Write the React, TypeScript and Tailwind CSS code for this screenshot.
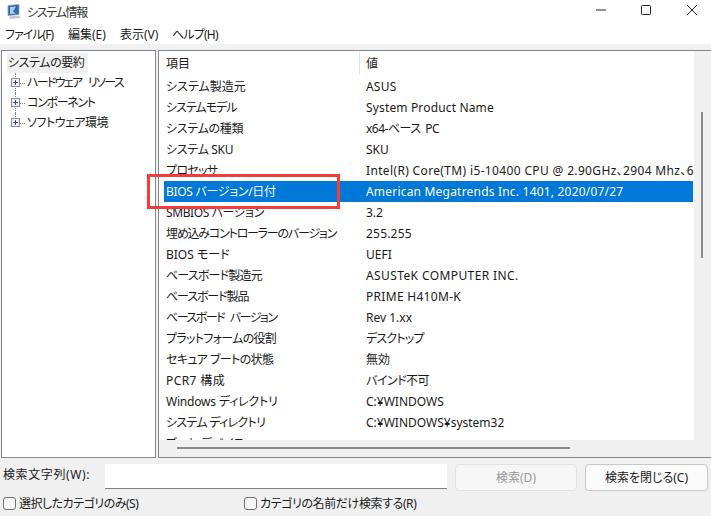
import React from "react";

// name, value, tracking of name, tracking of value
const rows = [
  ["システム製造元", "ASUS", "", "tracking-[0.2px]"],
  ["システムモデル", "System Product Name", "tracking-[-1px]", "tracking-[0.15px]"],
  ["システムの種類", "x64-ベース PC", "tracking-[-0.3px]", "tracking-[-0.5px] [word-spacing:2px]"],
  ["システム SKU", "SKU", "tracking-[-0.3px]", ""],
  ["プロセッサ", "Intel(R) Core(TM) i5-10400 CPU @ 2.90GHz、2904 Mhz、6", "tracking-[-0.7px]", "tracking-[0.35px]"],
  ["BIOS バージョン/日付", "American Megatrends Inc. 1401, 2020/07/27", "tracking-[-0.3px]", "tracking-[0.2px]"],
  ["SMBIOS バージョン", "3.2", "tracking-[-0.4px]", ""],
  ["埋め込みコントローラーのバージョン", "255.255", "tracking-[-1.2px]", "tracking-[0.2px]"],
  ["BIOS モード", "UEFI", "", ""],
  ["ベースボード製造元", "ASUSTeK COMPUTER INC.", "tracking-[-0.8px]", "tracking-[0.4px]"],
  ["ベースボード製品", "PRIME H410M-K", "tracking-[-1.1px]", "tracking-[0.3px]"],
  ["ベースボード バージョン", "Rev 1.xx", "tracking-[-1.5px] [word-spacing:4px]", ""],
  ["プラットフォームの役割", "デスクトップ", "tracking-[-0.7px]", "tracking-[-0.8px]"],
  ["セキュア ブートの状態", "無効", "tracking-[-0.6px]", ""],
  ["PCR7 構成", "バインド不可", "tracking-[0.4px]", "tracking-[-0.5px]"],
  ["Windows ディレクトリ", "C:¥WINDOWS", "tracking-[-0.2px]", ""],
  ["システム ディレクトリ", "C:¥WINDOWS¥system32", "tracking-[-0.7px]", ""],
  ["ブート デバイス", "", "", ""],
];

const TreeItem = ({ label, last, className }: { label: string; last?: boolean; className: string }) => (
  <div className="flex h-5 items-center">
    <div className="relative ml-[9px] h-full w-[9px] shrink-0">
      <div className={`absolute left-[4px] top-0 border-l border-dotted border-[#808080] ${last ? "h-[10px]" : "h-full"}`} />
      <div className="absolute left-0 top-[5px] flex h-[9px] w-[9px] items-center justify-center border border-[#8a8a9a] bg-[#eef0f4]">
        <svg width="7" height="7" viewBox="0 0 7 7">
          <path d="M1 3.5h5M3.5 1v5" stroke="#3a4a6a" strokeWidth="1" />
        </svg>
      </div>
    </div>
    <div className="w-[5px] border-t border-dotted border-[#808080]" />
    <span className={`ml-[2px] whitespace-nowrap ${className}`}>{label}</span>
  </div>
);

const Row = ({ row, selected }: { row: string[]; selected: boolean }) => (
  <div className={`flex h-[21px] shrink-0 items-center whitespace-nowrap pt-[1px] ${selected ? "bg-[#0078d7] text-white" : ""}`}>
    <div className={`w-[202px] shrink-0 pl-[2px] ${row[2]}`}>{row[0]}</div>
    <div className={row[3]}>{row[1]}</div>
  </div>
);

export default function App() {
  return (
    <div
      className="relative flex h-[516px] w-[711px] flex-col overflow-hidden bg-[#f0f0f0] text-[12px] text-[#1a1a1a] [font-feature-settings:'palt']"
      style={{ fontFamily: '"Noto Sans", "Noto Sans CJK JP", sans-serif' }}
    >
      <div className="h-[44px] shrink-0 bg-white">
        <div className="flex h-[25px] items-center">
          <svg className="mb-[2px] ml-[6px]" width="16" height="16" viewBox="0 0 16 16">
            <path d="M2 1.5l11-1v10l-11 1z" fill="#2f66ad" stroke="#8fa3bd" strokeWidth="0.8" />
            <path d="M4 3l6-.5-3 5 3 2-6 .5z" fill="#a9cdf2" />
            <path d="M3 12.5l10-1 2 2.5-11 1z" fill="#c4c9d0" />
          </svg>
          <span className="ml-[5px] tracking-[-1.3px] text-[#333]">システム情報</span>
          <div className="mb-[5px] ml-auto flex items-center">
            <svg width="12" height="12" viewBox="0 0 12 12" className="mr-[33px]">
              <path d="M1 6h10" stroke="#222" strokeWidth="1" />
            </svg>
            <svg width="12" height="12" viewBox="0 0 12 12" className="mr-[34px]">
              <rect x="1.5" y="1.5" width="9" height="9" rx="1" fill="none" stroke="#222" />
            </svg>
            <svg width="12" height="12" viewBox="0 0 12 12" className="mr-[13px]">
              <path d="M1 1l10 10M11 1L1 11" stroke="#222" strokeWidth="1" />
            </svg>
          </div>
        </div>
        <div className="flex h-[20px] items-center pl-[5px]">
          <span className="w-[63px] tracking-[-1px]">ファイル(F)</span>
          <span className="w-[52px]">編集(E)</span>
          <span className="w-[52px]">表示(V)</span>
          <span className="tracking-[-0.8px]">ヘルプ(H)</span>
        </div>
      </div>

      <div className="flex h-[414px] shrink-0 gap-[2px] pl-[1px] pt-[6px]">
        <div className="h-[408px] w-[155px] shrink-0 border border-[#828790] bg-white pt-[1px]">
          <div className="ml-[5px] mt-[1px] flex h-[20px] w-[81px] items-center whitespace-nowrap bg-[#f0f0f0] pl-[1px] tracking-[-0.4px]">システムの要約</div>
          <TreeItem label="ハードウェア リソース" className="tracking-[-1.7px] [word-spacing:5px]" />
          <TreeItem label="コンポーネント" className="tracking-[-1.3px]" />
          <TreeItem label="ソフトウェア環境" className="tracking-[-0.5px]" last />
        </div>
        <div className="relative h-[408px] min-w-0 flex-1 overflow-hidden border border-r-0 border-[#828790] bg-white">
          <div className="flex h-[25px] items-center pl-[7px]">
            <div className="w-[200px]">項目</div>
            <div>値</div>
          </div>
          <div className="absolute left-[200px] top-[1px] h-[23px] border-l border-[#e5e5e5]" />
          <div className="flex h-[364px] flex-col overflow-hidden pl-[5px] pr-[18px]">
            {rows.map((r) => (
              <Row key={r[0]} row={r} selected={r[0].startsWith("BIOS バ")} />
            ))}
          </div>
          <div className="absolute bottom-0 left-0 right-[17px] h-[17px] bg-[#f0f0f0]">
            <div className="absolute left-[18px] top-[7px] h-[2px] w-[393px] bg-[#8a8a8a]" />
          </div>
          <div className="absolute right-0 top-0 h-full w-[17px] bg-[#f0f0f0]">
            <div className="absolute left-[7px] top-[61px] h-[146px] w-[2px] bg-[#8a8a8a]" />
          </div>
        </div>
      </div>

      {/* annotation */}
      <div className="pointer-events-none absolute left-[147px] top-[174px] h-[35px] w-[193px] border-[3px] border-[#f53c3c]" />

      <div className="flex h-[28px] shrink-0 items-start pl-[3px] pt-[6px]">
        <span className="w-[102px] whitespace-nowrap pt-[2px] tracking-[0.6px]">検索文字列(W):</span>
        <div className="h-[25px] w-[342px] border-b border-[#808080] bg-white" />
        <button className="ml-[8px] h-[27px] w-[122px] rounded-[4px] border border-[#e2e2e2] bg-[#f6f6f6] text-[#999]">検索(D)</button>
        <button className="ml-[8px] h-[27px] w-[123px] rounded-[4px] border border-[#c8c8c8] bg-[#fbfbfb]">検索を閉じる(C)</button>
      </div>
      <div className="flex flex-1 items-center pl-[3px] pt-[5px]">
        <div className="flex w-[241px] items-center">
          <span className="h-[13px] w-[13px] rounded-[3px] border border-[#707070] bg-[#f6f6f6]" />
          <span className="ml-[3px] tracking-[-0.5px]">選択したカテゴリのみ(S)</span>
        </div>
        <span className="h-[13px] w-[13px] rounded-[3px] border border-[#707070] bg-[#f6f6f6]" />
        <span className="ml-[3px] tracking-[-0.4px]">カテゴリの名前だけ検索する(R)</span>
      </div>
    </div>
  );
}
